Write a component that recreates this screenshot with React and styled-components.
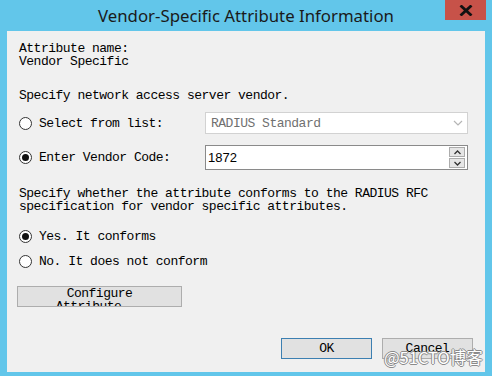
import React from 'react';
import styled, { createGlobalStyle } from 'styled-components';

const GlobalStyle = createGlobalStyle`
    html, body {
        margin: 0;
        padding: 0;
    }
    body {
        width: 492px;
        height: 376px;
        overflow: hidden;
        background: #62c6ea;
    }
`;

const Window = styled.div`
    position: relative;
    width: 492px;
    height: 376px;
    box-sizing: border-box;
    display: flex;
    flex-direction: column;
    background: #62c6ea;
`;

const TitleBar = styled.div`
    height: 31px;
    flex: none;
    display: grid;
    grid-template-columns: 1fr auto 1fr;
    padding-right: 6px;
    padding-left: 6px;
`;

const Title = styled.div`
    grid-column: 2;
    align-self: center;
    font-family: 'Noto Sans', 'Open Sans', sans-serif;
    font-size: 16.8px;
    color: #1a1a1a;
    white-space: nowrap;
    padding-bottom: 1px;
`;

const CloseButton = styled.div`
    grid-column: 3;
    justify-self: end;
    align-self: start;
    width: 41px;
    height: 20px;
    background: #c75249;
    display: flex;
    align-items: center;
    justify-content: center;
`;

const Client = styled.div`
    flex: 1;
    margin: 0 7px 4px;
    background: #f0f0f0;
    padding: 11px 12px 0 12px;
    display: flex;
    flex-direction: column;
    font-family: 'Liberation Mono', 'DejaVu Sans Mono', monospace;
    font-size: 13px;
    letter-spacing: -0.5px;
    line-height: 13px;
    color: #000;
`;

const Para = styled.div`
    margin-top: ${(p) => p.$mt || 0}px;
    white-space: pre;
`;

const FieldRow = styled.div`
    margin-top: ${(p) => p.$mt || 0}px;
    display: grid;
    grid-template-columns: 186px 263px;
    align-items: center;
`;

const RadioRow = styled.label`
    margin-top: ${(p) => p.$mt || 0}px;
    display: flex;
    align-items: center;
    gap: 7px;
    height: 16px;
`;

const RadioCircle = styled.span`
    width: 13px;
    height: 13px;
    box-sizing: border-box;
    border: 1px solid #333;
    border-radius: 50%;
    background: #fff;
    display: flex;
    align-items: center;
    justify-content: center;
    flex: none;

    &::after {
        content: '';
        width: 7px;
        height: 7px;
        border-radius: 50%;
        background: ${(p) => (p.$checked ? '#111' : 'transparent')};
    }
`;

const Combo = styled.div`
    height: 22px;
    box-sizing: border-box;
    border: 1px solid #d2d2d2;
    background: #fff;
    display: flex;
    align-items: center;
    justify-content: space-between;
    padding: 0 4px 0 5px;
    color: #707070;
`;

const TextBox = styled.div`
    height: 25px;
    box-sizing: border-box;
    border: 1px solid #8a8a8a;
    background: #fff;
    display: flex;
    align-items: center;
    padding: 1px 1px 1px 2px;
`;

const NumberText = styled.span`
    flex: 1;
    font-family: 'Liberation Sans', Arial, sans-serif;
    font-size: 13px;
    letter-spacing: 0;
`;

const Spinner = styled.div`
    display: flex;
    flex-direction: column;
    gap: 1px;
    margin-right: 1px;
`;

const SpinButton = styled.div`
    width: 16px;
    height: 10px;
    box-sizing: border-box;
    border: 1px solid #acacac;
    background: #e6e6e6;
    display: flex;
    align-items: center;
    justify-content: center;
`;

const PushButton = styled.div`
    width: ${(p) => p.$w}px;
    height: 21px;
    box-sizing: border-box;
    border: 1px solid ${(p) => (p.$focus ? '#3c7fb1' : '#adadad')};
    background: #e1e1e1;
    display: flex;
    align-items: center;
    justify-content: center;
    overflow: hidden;
`;

const ConfigureButton = styled.div`
    margin-top: 17px;
    margin-left: -2px;
    align-self: flex-start;
    width: 165px;
    height: 21px;
    box-sizing: border-box;
    border: 1px solid #adadad;
    background: #e1e1e1;
    overflow: hidden;
    display: flex;
    flex-direction: column;
    align-items: center;
`;

const ConfigLine = styled.span`
    white-space: pre;
    margin-left: ${(p) => p.$shift || 0}px;
`;

const Footer = styled.div`
    margin-top: 31px;
    display: flex;
    justify-content: flex-end;
    gap: 10px;
`;

const Watermark = styled.div`
    position: absolute;
    left: 384px;
    top: 348px;
    font-family: 'Noto Sans CJK SC', 'Noto Sans', sans-serif;
    font-size: 16.5px;
    line-height: 19px;
    color: #fff;
    text-shadow: 1px 0 0 #8a8a8a, -1px 0 0 #8a8a8a, 0 1px 0 #8a8a8a, 0 -1px 0 #8a8a8a;
    white-space: nowrap;
`;

const Chevron = ({ up, color = '#333' }) => (
    <svg width="7" height="5" viewBox="0 0 7 5">
        <path
            d={up ? 'M0.5 4 L3.5 1 L6.5 4' : 'M0.5 1 L3.5 4 L6.5 1'}
            fill="none"
            stroke={color}
            strokeWidth="1.3"
        />
    </svg>
);

const Radio = ({ checked, children, mt }) => (
    <RadioRow $mt={mt}>
        <RadioCircle $checked={checked} />
        <span>{children}</span>
    </RadioRow>
);

const App = () => (
    <Window>
        <GlobalStyle />
        <TitleBar>
            <Title>Vendor-Specific Attribute Information</Title>
            <CloseButton>
                <svg width="14" height="11" viewBox="0 0 14 11">
                    <path d="M1.5 0.5 L12.5 10.5 M12.5 0.5 L1.5 10.5" stroke="#111" strokeWidth="2.8" />
                </svg>
            </CloseButton>
        </TitleBar>
        <Client>
            <Para>{'Attribute name:\nVendor Specific'}</Para>
            <Para $mt={21}>Specify network access server vendor.</Para>
            <FieldRow $mt={10}>
                <Radio>Select from list:</Radio>
                <Combo>
                    <span>RADIUS Standard</span>
                    <svg width="10" height="6" viewBox="0 0 10 6">
                        <path d="M1 1 L5 5 L9 1" fill="none" stroke="#b5b5b5" strokeWidth="1.2" />
                    </svg>
                </Combo>
            </FieldRow>
            <FieldRow $mt={11}>
                <Radio checked>Enter Vendor Code:</Radio>
                <TextBox>
                    <NumberText>1872</NumberText>
                    <Spinner>
                        <SpinButton>
                            <Chevron up />
                        </SpinButton>
                        <SpinButton>
                            <Chevron />
                        </SpinButton>
                    </Spinner>
                </TextBox>
            </FieldRow>
            <Para $mt={17}>
                {'Specify whether the attribute conforms to the RADIUS RFC\nspecification for vendor specific attributes.'}
            </Para>
            <Radio checked mt={15}>Yes. It conforms</Radio>
            <Radio mt={9}>No. It does not conform</Radio>
            <ConfigureButton>
                <ConfigLine>Configure</ConfigLine>
                <ConfigLine $shift={-22}>Attribute</ConfigLine>
            </ConfigureButton>
            <Footer>
                <PushButton $w={91} $focus>OK</PushButton>
                <PushButton $w={91}>Cancel</PushButton>
            </Footer>
        </Client>
        <Watermark>@51CTO博客</Watermark>
    </Window>
);

export default App;
